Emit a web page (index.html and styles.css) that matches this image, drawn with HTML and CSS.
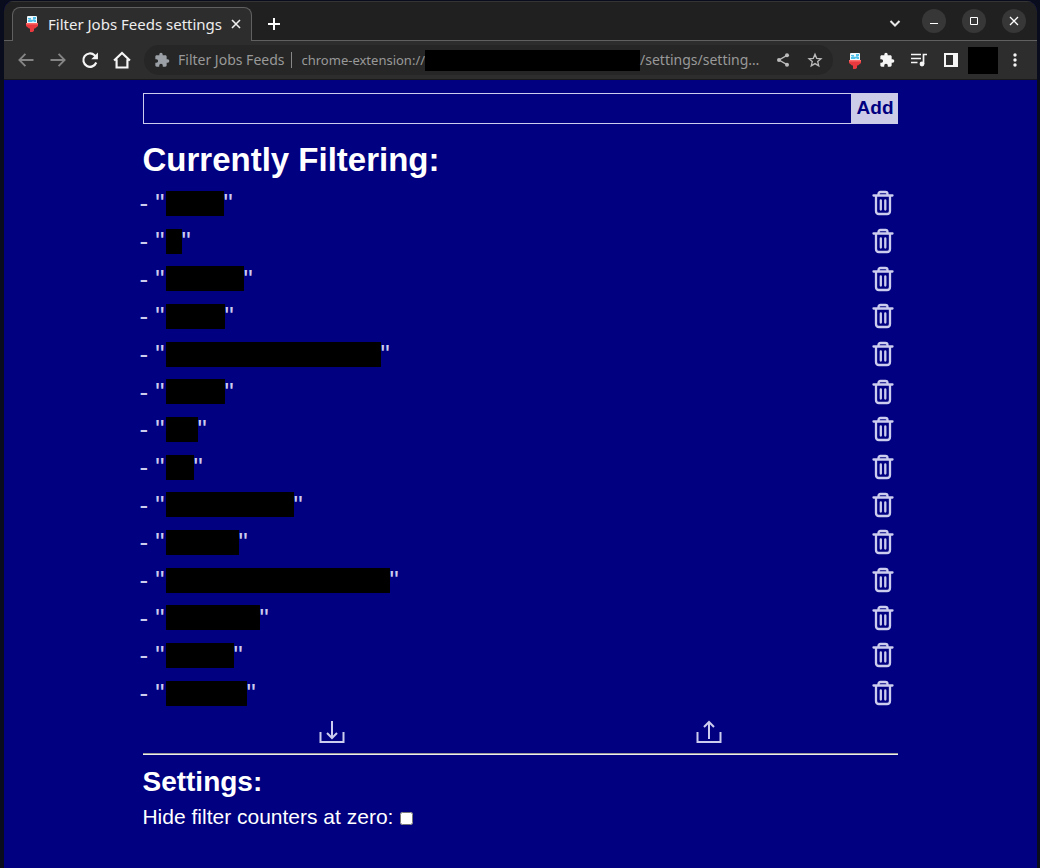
FILE: index.html
```
<!DOCTYPE html>
<html lang="en">
<head>
<meta charset="utf-8">
<title>Filter Jobs Feeds settings</title>
<link rel="stylesheet" href="styles.css">
</head>
<body>
<svg class="defs" aria-hidden="true">
  <symbol id="funnel" viewBox="0 0 16 18">
    <path d="M3 2q0-1 1-1h8q1 0 1 1v6H3z" fill="#eef8fd"/><path d="M4 3h3v1H4zM9 2h3v2H9zM4 5l2-1 2 1 2-1 2 1v2h-2l-1-1-1 1H4z" fill="#4fc0ea"/>
    <path d="M2 8h12v3l-3 2.500h-1V16l-1.500 1H6v-3.500H5L2 11z" fill="#e8393f"/><path d="M2 8h12v1.500H2z" fill="#fa6a68"/>
  </symbol>
  <symbol id="puzzle" viewBox="0 0 24 24"><path fill="currentColor" d="M20.5 11H19V7c0-1.1-.9-2-2-2h-4V3.500a2.500 2.500 0 0 0-5 0V5H4c-1.100 0-2 .9-2 2v3.800h1.500a2.700 2.700 0 0 1 0 5.400H2V20c0 1.100.9 2 2 2h3.800v-1.500a2.700 2.700 0 0 1 5.400 0V22H17c1.100 0 2-.9 2-2v-4h1.500a2.500 2.500 0 0 0 0-5z"/></symbol>
  <symbol id="trash" viewBox="0 0 24 28"><g fill="none" stroke="currentColor" stroke-width="2.300" stroke-linecap="round" stroke-linejoin="round"><path d="M2.500 6.500h19M7.500 6V5Q7.500 3 9.500 3h5Q16.500 3 16.500 5v1M5 7v15q0 3 3 3h8q3 0 3-3V7"/><path d="M9.800 11.500v9M14.300 11.500v9"/></g></symbol>
</svg>
<div class="window">
  <header class="tabs">
    <div class="tab">
      <svg class="fav"><use href="#funnel"/></svg>
      <span class="tab-title">Filter Jobs Feeds settings</span>
      <button class="tab-close" aria-label="Close tab"><svg viewBox="0 0 10 10"><path d="M1 1l8 8M9 1L1 9" stroke="#eee" stroke-width="1.600"/></svg></button>
    </div>
    <button class="new-tab" aria-label="New tab"><svg viewBox="0 0 12 12"><path d="M6 0v12M0 6h12" stroke="#fff" stroke-width="2"/></svg></button>
    <div class="controls">
      <button class="chevron" aria-label="Search tabs"><svg viewBox="0 0 12 12"><path d="M1.500 4L6 8.500 10.500 4" fill="none" stroke="#e8e8e8" stroke-width="2"/></svg></button>
      <button class="round" aria-label="Minimize"><svg viewBox="0 0 12 12"><path d="M2 8.500h8" stroke="#fff"/></svg></button>
      <button class="round" aria-label="Maximize"><svg viewBox="0 0 12 12"><path d="M2.500 2.500h7v7h-7z" fill="none" stroke="#fff"/></svg></button>
      <button class="round" aria-label="Close"><svg viewBox="0 0 12 12"><path d="M2 2l8 8M10 2l-8 8" stroke="#fff" stroke-width="1.300"/></svg></button>
    </div>
  </header>
  <nav class="toolbar">
    <button class="tool dim" aria-label="Back"><svg viewBox="0 0 24 24"><path fill="currentColor" d="M21 10.800H6.800l5.300-5.300L10.500 4l-8 8 8 8 1.600-1.500-5.300-5.300H21z"/></svg></button>
    <button class="tool dim" aria-label="Forward"><svg viewBox="0 0 24 24"><path fill="currentColor" d="M3 10.800h14.200l-5.300-5.300L13.500 4l8 8-8 8-1.600-1.500 5.300-5.300H3z"/></svg></button>
    <button class="tool" aria-label="Reload"><svg viewBox="0 0 24 24"><path d="M19.500 15a8 8 0 1 1-2-8.700L20 9" fill="none" stroke="currentColor" stroke-width="2.600"/><path d="M21.500 3v8h-8z" fill="currentColor"/></svg></button>
    <button class="tool" aria-label="Home"><svg viewBox="0 0 24 24"><path d="M2.500 12.500L12 3.500l9.500 9M5.500 11v10h13V11" fill="none" stroke="currentColor" stroke-width="2.600"/></svg></button>
    <div class="address">
      <svg class="site"><use href="#puzzle"/></svg>
      <span class="site-name">Filter Jobs Feeds</span>
      <span class="url"><span class="scheme">chrome-extension://</span><span class="mask"></span><span>/settings/setting…</span></span>
      <button class="small" aria-label="Share"><svg viewBox="0 0 24 24"><path d="M18 5L6 12l12 7" fill="none" stroke="currentColor" stroke-width="2"/><g fill="currentColor"><circle cx="18" cy="5" r="3"/><circle cx="6" cy="12" r="3"/><circle cx="18" cy="19" r="3"/></g></svg></button>
      <button class="small star" aria-label="Bookmark"><svg viewBox="0 0 24 24"><path d="M12 3.500l2.500 6 6.500.6-4.900 4.300 1.500 6.400-5.600-3.400-5.600 3.400 1.500-6.400L3 10.100l6.500-.6z" fill="none" stroke="currentColor" stroke-width="2"/></svg></button>
    </div>
    <div class="extensions">
      <button class="ext" aria-label="Filter Jobs Feeds"><svg class="fav"><use href="#funnel"/></svg></button>
      <button class="ext" aria-label="Extensions"><svg><use href="#puzzle"/></svg></button>
      <button class="ext" aria-label="Media"><svg viewBox="0 0 16 16"><path d="M0 2.500h10M0 6.500h10M0 10.500h6.500M12.500 12V2.500H16" fill="none" stroke="currentColor" stroke-width="1.700"/><circle cx="11" cy="12" r="2.400" fill="currentColor"/></svg></button>
      <button class="ext" aria-label="Side panel"><svg viewBox="0 0 16 16"><path fill="currentColor" fill-rule="evenodd" d="M1 1h14v14H1zM3 3v10h7V3z"/></svg></button>
      <span class="profile"></span>
      <button class="ext" aria-label="Menu"><svg viewBox="0 0 16 16"><g fill="currentColor"><circle cx="8" cy="3" r="1.700"/><circle cx="8" cy="8" r="1.700"/><circle cx="8" cy="13" r="1.700"/></g></svg></button>
    </div>
  </nav>
  <main class="page">
    <form class="add"><input type="text" aria-label="New filter"><button type="button">Add</button></form>
    <h1>Currently Filtering:</h1>
    <ul class="filters" id="filters"></ul>
    <div class="transfer">
      <button aria-label="Import"><svg viewBox="0 0 26 24"><path d="M1.500 12v10h23V12M13 1v17M8 13l5 5 5-5" fill="none" stroke="currentColor" stroke-width="2"/></svg></button>
      <button aria-label="Export"><svg viewBox="0 0 26 24"><path d="M1.500 12v10h23V12M13 19V2M8 7l5-5 5 5" fill="none" stroke="currentColor" stroke-width="2"/></svg></button>
    </div>
    <hr>
    <h2>Settings:</h2>
    <div class="option"><label for="hide">Hide filter counters at zero:</label><input type="checkbox" id="hide"></div>
  </main>
</div>
<script src="script.js"></script>
</body>
</html>
```
FILE: styles.css
```
* { box-sizing: border-box; }
body { margin: 0; min-height: 100vh; padding: 1px 3px 0; background: #080c1c; font-family: "Liberation Sans", Arial, sans-serif; }
button { padding: 0; border: 0; background: none; color: inherit; display: grid; place-items: center; }
svg { display: block; }
.defs { position: absolute; width: 0; height: 0; }
.window { min-height: calc(100vh - 1px); display: flex; flex-direction: column; background: #000080; border-left: 1px solid #080c1c; border-radius: 10px 10px 0 0; overflow: hidden; }

.tabs { display: flex; align-items: flex-end; height: 40px; padding-left: 8px; background: #202020; border-top: 1px solid #343434; border-bottom: 1px solid #606060; font: 15px/20px "Noto Sans", sans-serif; color: #eee; }
.tab { display: flex; align-items: center; width: 240px; height: 34px; margin-bottom: -1px; padding: 0 10px 2px 11px; background: #2d2d2d; border: 1px solid #606060; border-bottom: 0; border-radius: 8px 8px 0 0; }
.fav { width: 16px; height: 18px; }
.tab-title { flex: 1; margin-left: 8px; white-space: nowrap; }
.tab-close, .tab-close svg { width: 10px; height: 10px; }
.new-tab { width: 12px; height: 12px; margin: 0 0 10px 16px; }
.new-tab svg, .chevron svg, .round svg { width: 12px; height: 12px; }
.controls { display: flex; align-items: center; gap: 16px; margin-left: auto; padding: 0 11px 5px 0; }
.chevron { width: 24px; height: 24px; margin: 5px -1px 0 0; }
.round { width: 24px; height: 24px; border-radius: 50%; background: #373737; }

.toolbar { display: flex; align-items: center; height: 39px; padding: 0 14px 0 12px; background: #2d2d2d; border-bottom: 1px solid #1a1a1a; font: 14px/20px "Noto Sans", sans-serif; color: #f5f5f5; }
.tool { width: 20px; height: 20px; margin-right: 12px; }
.tool svg { width: 20px; height: 20px; }
.dim { color: #858585; }
.address { flex: 1; min-width: 0; display: flex; align-items: center; height: 30px; padding: 0 10px; border-radius: 15px; background: #262626; color: #999; }
.site { width: 16px; height: 16px; margin-right: 8px; color: #9aa0a6; }
.site-name { padding-right: 7px; border-right: 1px solid #888; line-height: 16px; white-space: nowrap; }
.url { flex: 1; display: flex; align-items: center; margin-left: 9px; white-space: nowrap; }
.scheme { font-size: 13px; }
.mask { flex: none; width: 215px; height: 21px; background: #000; }
.small { width: 16px; height: 16px; color: #bbb; }
.small svg { width: 16px; height: 16px; }
.star { margin-left: 16px; }
.extensions { display: flex; align-items: center; gap: 16px; margin-left: 14px; }
.ext, .ext svg { width: 16px; height: 16px; }
.ext .fav { height: 18px; }
.profile { width: 30px; height: 27px; margin: 0 -7px; background: #000; }

.page { width: 73%; margin: 0 auto; padding: 13px 0 32px; color: #fff; }
.add { display: flex; }
.add input { flex: 1; min-width: 0; height: 31px; border: 1px solid #ccccee; border-right: 0; background: transparent; color: #fff; font: 19px "Liberation Sans", sans-serif; }
.add button { width: 47px; padding: 0 0 2px 2px; background: #cccce8; color: #000080; font: bold 19px/22px "Liberation Sans", sans-serif; }
h1 { margin: 17px 0 5px -1px; font-size: 33px; line-height: 38px; }
.filters { list-style: none; margin: 0 0 0 -4px; padding: 0; color: #ccccee; font-size: 26px; }
.filters li { display: flex; align-items: center; height: 38px; line-height: 28px; white-space: pre; }
.filters li:nth-child(3n) { height: 37px; }
.filters .mask { height: 25px; margin-left: 1px; }
.trash { margin-left: auto; padding-right: 3px; }
.trash svg { width: 24px; height: 28px; }
.transfer { display: grid; grid-template-columns: 1fr 1fr; height: 39px; color: #ccccee; }
.transfer svg { width: 26px; height: 24px; }
hr { margin: 2px 0 10px; border: 0; border-top: 1px solid #999; border-bottom: 1px solid #eee; }
h2 { margin: 0 0 0 -1px; font-size: 28px; line-height: 34px; }
.option { display: flex; align-items: center; margin: 6px 0 0 -1px; font-size: 21px; line-height: 24px; }
.option input { width: 13px; height: 13px; margin: 3px 0 0 7px; }
```
FILE: script.js
```
const widths = [58, 16, 78, 59, 215, 59, 32, 28, 128, 73, 224, 94, 68, 81];
document.getElementById("filters").innerHTML = widths.map((width) =>
  `<li>- "<span class="mask" style="width:${width}px"></span>"<button class="trash" aria-label="Delete filter"><svg><use href="#trash"/></svg></button></li>`
).join("");
```
